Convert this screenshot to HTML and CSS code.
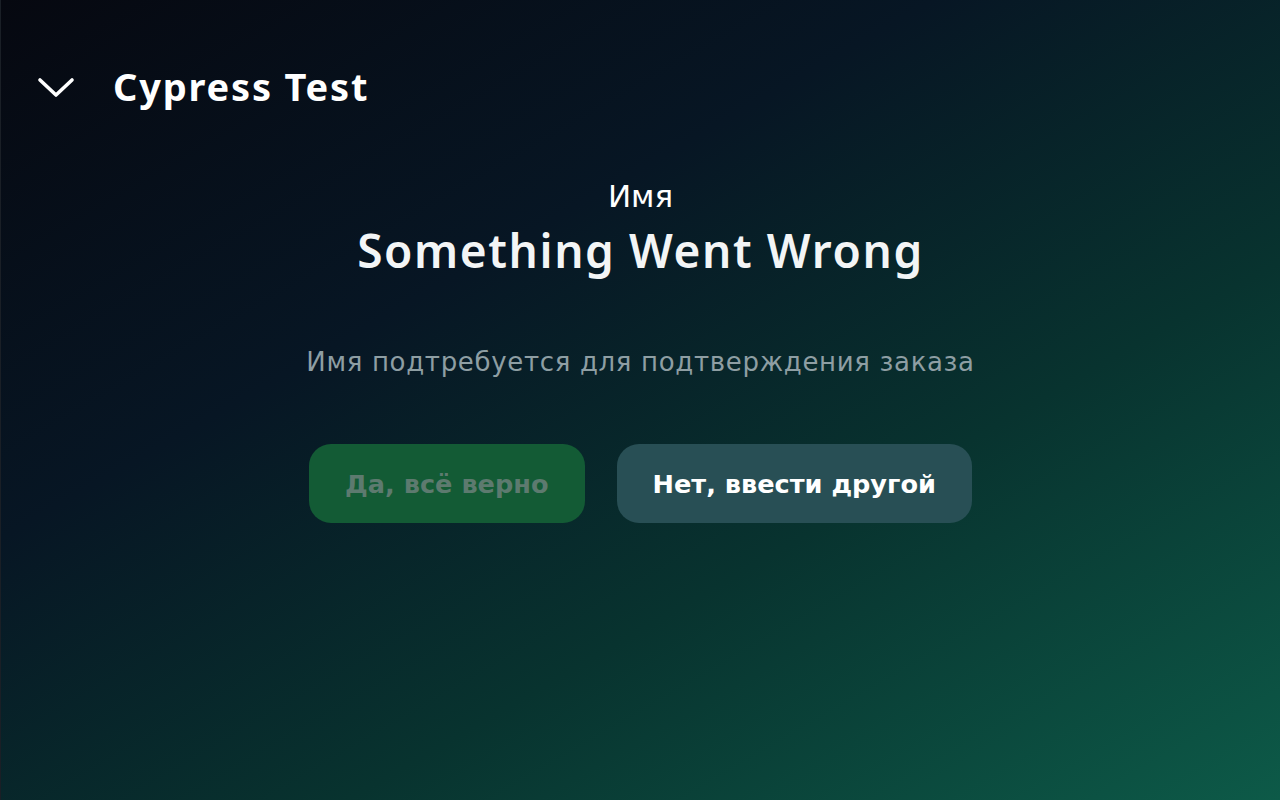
FILE: index.html
```html
<!DOCTYPE html>
<html lang="ru">
<head>
<meta charset="utf-8">
<title>Cypress Test</title>
<link rel="stylesheet" href="styles.css">
</head>
<body>
<div class="screen">
  <header class="header">
    <button class="back" aria-label="Свернуть">
      <svg width="38" height="24" viewBox="0 0 38 24"><path d="M3 4 L19 19 L35 4" fill="none" stroke="#fff" stroke-width="3.6" stroke-linecap="round" stroke-linejoin="round"/></svg>
    </button>
    <h1 class="title">Cypress Test</h1>
  </header>
  <main class="content">
    <div class="label">Имя</div>
    <h2 class="value">Something Went Wrong</h2>
    <p class="hint">Имя подтребуется для подтверждения заказа</p>
    <div class="actions">
      <button class="btn btn-confirm" disabled>Да, всё верно</button>
      <button class="btn btn-other">Нет, ввести другой</button>
    </div>
  </main>
</div>
</body>
</html>
```
FILE: styles.css
```css
html, body {
  margin: 0;
  padding: 0;
  height: 100%;
}
body {
  font-family: "DejaVu Sans", sans-serif;
  color: #fff;
}
.screen {
  box-sizing: border-box;
  width: 1280px;
  height: 800px;
  border-left: 1px solid #1a1f26;
  background: linear-gradient(150deg, #060810 0%, #071624 35%, #08332f 65%, #0d5a48 100%);
  overflow: hidden;
}
.header {
  display: flex;
  align-items: center;
  padding: 64px 0 0 36px;
  height: 48px;
}
.back {
  background: none;
  border: 0;
  padding: 0;
  width: 38px;
  height: 24px;
  margin-right: 38px;
  display: flex;
}
.title {
  margin: 0;
  padding-bottom: 4px;
  font-family: "Noto Sans", "DejaVu Sans", sans-serif;
  font-size: 38px;
  font-weight: 700;
  letter-spacing: 1.8px;
  line-height: 44px;
}
.content {
  display: flex;
  flex-direction: column;
  align-items: center;
  padding-top: 64px;
}
.label {
  font-size: 31px;
  line-height: 40px;
}
.value {
  margin: 6px 0 0;
  font-family: "Noto Sans", "DejaVu Sans", sans-serif;
  font-size: 46px;
  font-weight: 600;
  letter-spacing: 1.6px;
  line-height: 56px;
  color: #f3f5f6;
}
.hint {
  margin: 64px 0 0;
  font-size: 26px;
  line-height: 40px;
  color: #8e9ea3;
  letter-spacing: 0.67px;
}
.actions {
  display: flex;
  gap: 32px;
  margin-top: 62px;
}
.btn {
  font-family: "DejaVu Sans", sans-serif;
  height: 79px;
  border: 0;
  border-radius: 22px;
  font-size: 25.6px;
  font-weight: 700;
  padding: 0 36px;
}
.btn-confirm {
  background: #135b35;
  color: #5d7a6f;
}
.btn-other {
  background: #284f55;
  color: #fff;
}
```
